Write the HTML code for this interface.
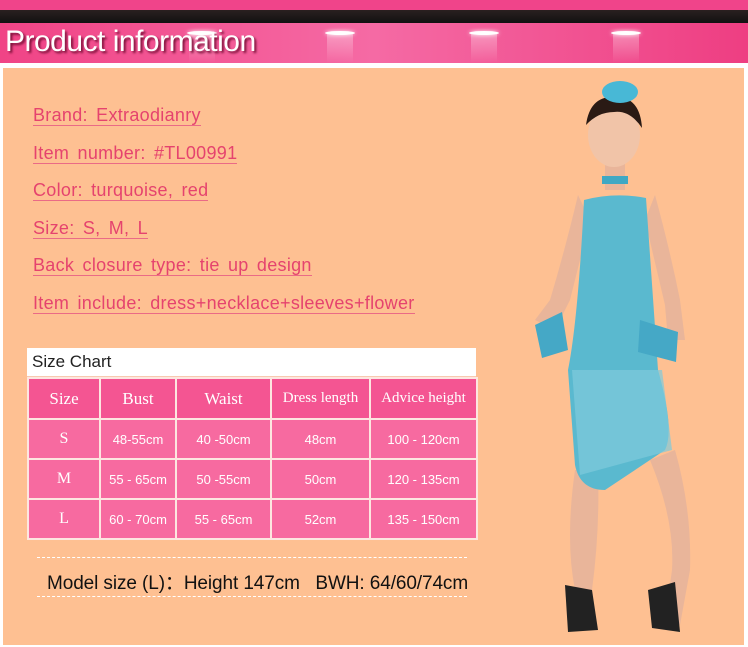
<!DOCTYPE html>
<html><head><meta charset="utf-8"><style>
body{margin:0;width:748px;height:647px;overflow:hidden;background:#fff;font-family:"Liberation Sans",sans-serif;position:relative}
.top{position:absolute;left:0;top:0;width:748px;height:10px;background:#f0448a}
.blk{position:absolute;left:0;top:10px;width:748px;height:13px;background:linear-gradient(#2a2020,#111)}
.band{position:absolute;left:0;top:23px;width:748px;height:40px;background:linear-gradient(90deg,#f04486,#f56aa4 50%,#ee3e82)}
.band h1{position:absolute;left:5px;top:2px;margin:0;font:30px "Liberation Sans",sans-serif;color:#fff;letter-spacing:-0.5px;text-shadow:2px 2px 2px #7a1038;white-space:nowrap}
.lamp{position:absolute;top:8px;width:30px;height:4px;border-radius:50%;background:#fff;box-shadow:0 0 4px #fff}
.beam{position:absolute;top:10px;width:26px;height:30px;background:linear-gradient(rgba(255,255,255,.35),rgba(255,255,255,0))}
.panel{position:absolute;left:3px;top:68px;width:741px;height:577px;background:#fec092}
.info{position:absolute;left:33px;font-size:18px;color:#e5436e;letter-spacing:0.3px;border-bottom:1px solid #ea6a86;line-height:20px;word-spacing:3px;white-space:nowrap}
table{position:absolute;left:27px;top:377px;border-collapse:collapse;table-layout:fixed;width:449px}
td{border:2px solid #fde6e0;background:#f76aa0;color:#fff;text-align:center;font-size:13px;height:38px;padding:0;white-space:nowrap}
tr.h td{background:#f45592;font-family:"Liberation Serif",serif;font-size:17px;height:39px}
td.s{font-family:"Liberation Serif",serif;font-size:16px}
.sc{position:absolute;left:27px;top:348px;width:449px;height:28px;background:#fff;font-size:17px;color:#222;line-height:28px;text-indent:5px;border-bottom:1px solid #f8c9b0}
.dl{position:absolute;left:37px;width:430px;border-top:1px dashed #fff}
.model{position:absolute;left:47px;top:568px;font:19px "Liberation Sans",sans-serif;color:#111;white-space:nowrap;letter-spacing:-0.1px}
</style></head><body>
<div class="top"></div><div class="blk"></div>
<div class="band">
<div class="beam" style="left:189px"></div><div class="beam" style="left:327px"></div><div class="beam" style="left:471px"></div><div class="beam" style="left:613px"></div>
<div class="lamp" style="left:187px"></div><div class="lamp" style="left:325px"></div><div class="lamp" style="left:469px"></div><div class="lamp" style="left:611px"></div>
<h1>Product information</h1></div>
<div class="panel"></div>
<div class="info" style="top:105px">Brand: Extraodianry</div>
<div class="info" style="top:143px">Item number: #TL00991</div>
<div class="info" style="top:180px">Color: turquoise, red</div>
<div class="info" style="top:218px">Size: S, M, L</div>
<div class="info" style="top:255px">Back closure type: tie up design</div>
<div class="info" style="top:293px">Item include: dress+necklace+sleeves+flower</div>
<div class="sc">Size Chart</div>
<table>
<colgroup><col style="width:72px"><col style="width:76px"><col style="width:95px"><col style="width:99px"><col style="width:107px"></colgroup>
<tr class="h"><td>Size</td><td>Bust</td><td>Waist</td><td style="font-size:15px">Dress length</td><td style="font-size:15px">Advice height</td></tr>
<tr><td class="s">S</td><td>48-55cm</td><td>40 -50cm</td><td>48cm</td><td>100 - 120cm</td></tr>
<tr><td class="s">M</td><td>55 - 65cm</td><td>50 -55cm</td><td>50cm</td><td>120 - 135cm</td></tr>
<tr><td class="s">L</td><td>60 - 70cm</td><td>55 - 65cm</td><td>52cm</td><td>135 - 150cm</td></tr>
</table>
<div class="dl" style="top:557px"></div>
<div class="model">Model size (L)：Height 147cm&nbsp;&nbsp; BWH: 64/60/74cm</div>
<div class="dl" style="top:596px"></div>
<svg style="position:absolute;left:480px;top:70px" width="268" height="577">
<g fill="#e9b59a">
<path d="M98 125 Q85 180 70 230 L55 250 L75 260 L90 230 L110 150 Z"/>
<path d="M175 125 Q190 180 200 230 L205 270 L188 270 L185 235 L165 150 Z"/>
<path d="M95 400 Q85 470 95 520 L92 560 L110 560 L112 520 Q120 460 118 400 Z"/>
<path d="M170 390 Q195 450 192 500 L185 550 L200 555 L210 500 Q212 440 195 380 Z"/>
<rect x="125" y="90" width="20" height="30"/>
</g>
<ellipse cx="134" cy="65" rx="26" ry="32" fill="#f1c4a8"/>
<path d="M106 55 Q110 25 136 27 Q160 27 162 58 Q150 40 134 42 Q118 42 106 55Z" fill="#2a1a14"/>
<ellipse cx="140" cy="22" rx="18" ry="11" fill="#48b8d6"/>
<rect x="122" y="106" width="26" height="8" fill="#3fa8c4"/>
<path d="M104 130 Q135 122 166 128 L178 300 Q195 360 185 380 L125 420 Q100 420 95 395 L88 300 Q98 250 104 130Z" fill="#5ab9cf"/>
<path d="M92 300 L182 300 L192 380 L100 405Z" fill="#7fcbdc" opacity=".7"/>
<path d="M55 255 L82 242 L88 280 L62 288Z" fill="#45a8c6"/>
<path d="M160 250 L198 262 L196 292 L158 282Z" fill="#45a8c6"/>
<path d="M85 515 L112 520 L118 560 L88 562Z" fill="#222"/>
<path d="M168 520 L195 512 L200 562 L172 558Z" fill="#222"/>
</svg>
</body></html>
